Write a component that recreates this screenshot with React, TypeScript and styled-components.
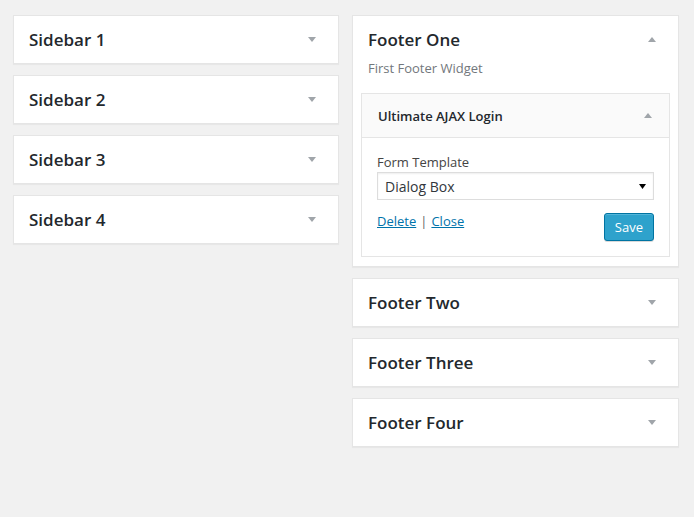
import React from "react";
import styled, { createGlobalStyle } from "styled-components";

const GlobalStyle = createGlobalStyle`
  html, body {
    margin: 0;
    padding: 0;
    background: #f1f1f1;
    font-family: "Open Sans", "Liberation Sans", sans-serif;
    color: #444;
  }
  * { box-sizing: border-box; }
`;

const Page = styled.div`
  display: grid;
  grid-template-columns: 326px 327px;
  column-gap: 13px;
  align-items: start;
  padding: 15px 15px 0 13px;
  min-height: 517px;
`;

const Column = styled.div`
  display: flex;
  flex-direction: column;
  gap: 11px;
`;

const Card = styled.section`
  background: #fff;
  border: 1px solid #e5e5e5;
  box-shadow: 0 1px 1px rgba(0, 0, 0, 0.04);
`;

const CardHead = styled.div<{ $open?: boolean }>`
  display: flex;
  align-items: center;
  justify-content: space-between;
  padding: ${(p) => (p.$open ? "14px 22px 0 15px" : "14px 22px 14px 15px")};
`;

const Title = styled.h2`
  margin: 0;
  font-size: 17px;
  line-height: 19px;
  font-weight: 600;
  color: #23282d;
`;

const Arrow = styled.span<{ $up?: boolean; $tone?: string }>`
  display: block;
  width: 0;
  height: 0;
  border-left: 4px solid transparent;
  border-right: 4px solid transparent;
  ${(p) =>
    p.$up
      ? `border-bottom: 5px solid ${p.$tone || "#a0a5aa"};`
      : `border-top: 5px solid ${p.$tone || "#a0a5aa"};`}
`;

const Description = styled.p`
  margin: 0;
  padding: 10px 15px 16px;
  font-size: 13px;
  line-height: 18px;
  color: #72777c;
`;

const Widget = styled.div`
  margin: 0 8px 9px 8px;
  border: 1px solid #e5e5e5;
  background: #fff;
`;

const WidgetTop = styled.div`
  display: flex;
  align-items: center;
  justify-content: space-between;
  height: 44px;
  padding: 0 17px 0 16px;
  background: #fafafa;
  border-bottom: 1px solid #e5e5e5;
`;

const WidgetTitle = styled.h3`
  margin: 0;
  font-size: 13px;
  font-weight: 600;
  color: #23282d;
`;

const WidgetInside = styled.div`
  padding: 15px 15px 15px;
`;

const Label = styled.label`
  display: block;
  font-size: 13px;
  line-height: 18px;
  color: #444;
`;

const Select = styled.select`
  display: block;
  width: 100%;
  height: 28px;
  margin-top: 1px;
  padding: 0 24px 0 7px;
  border: 1px solid #ddd;
  border-radius: 0;
  background: #fff
    url("data:image/svg+xml;utf8,<svg xmlns='http://www.w3.org/2000/svg' width='7' height='5'><path d='M0 0h7L3.5 5z' fill='%23000'/></svg>")
    no-repeat right 7px center;
  appearance: none;
  -webkit-appearance: none;
  font-family: "Open Sans", "Liberation Sans", sans-serif;
  font-size: 14px;
  color: #32373c;
  box-shadow: inset 0 1px 2px rgba(0, 0, 0, 0.07);
`;

const Actions = styled.div`
  display: flex;
  justify-content: space-between;
  align-items: flex-start;
  margin-top: 13px;
`;

const Links = styled.div`
  font-size: 13px;
  line-height: 16px;
  color: #72777c;
`;

const Link = styled.a`
  color: #0073aa;
  text-decoration: underline;
`;

const Sep = styled.span`
  color: #666;
  margin: 0 4px;
`;

const SaveButton = styled.button`
  height: 28px;
  padding: 0 10px;
  font-family: "Open Sans", "Liberation Sans", sans-serif;
  font-size: 13px;
  line-height: 26px;
  color: #fff;
  background: #2ea2cc;
  border: 1px solid #0074a2;
  border-radius: 3px;
  box-shadow: inset 0 1px 0 rgba(120, 200, 230, 0.5), 0 1px 0 rgba(0, 0, 0, 0.15);
`;

const sidebars = ["Sidebar 1", "Sidebar 2", "Sidebar 3", "Sidebar 4"];
const footers = ["Footer Two", "Footer Three", "Footer Four"];

function ClosedArea({ name }: { name: string }) {
  return (
    <Card>
      <CardHead>
        <Title>{name}</Title>
        <Arrow />
      </CardHead>
    </Card>
  );
}

export default function App() {
  return (
    <>
      <GlobalStyle />
      <Page>
        <Column>
          {sidebars.map((s) => (
            <ClosedArea key={s} name={s} />
          ))}
        </Column>
        <Column>
          <Card>
            <CardHead $open>
              <Title>Footer One</Title>
              <Arrow $up />
            </CardHead>
            <Description>First Footer Widget</Description>
            <Widget>
              <WidgetTop>
                <WidgetTitle>Ultimate AJAX Login</WidgetTitle>
                <Arrow $up />
              </WidgetTop>
              <WidgetInside>
                <Label htmlFor="tpl">Form Template</Label>
                <Select id="tpl" defaultValue="dialog">
                  <option value="dialog">Dialog Box</option>
                </Select>
                <Actions>
                  <Links>
                    <Link href="#">Delete</Link>
                    <Sep>|</Sep>
                    <Link href="#">Close</Link>
                  </Links>
                  <SaveButton type="button">Save</SaveButton>
                </Actions>
              </WidgetInside>
            </Widget>
          </Card>
          {footers.map((f) => (
            <ClosedArea key={f} name={f} />
          ))}
        </Column>
      </Page>
    </>
  );
}
